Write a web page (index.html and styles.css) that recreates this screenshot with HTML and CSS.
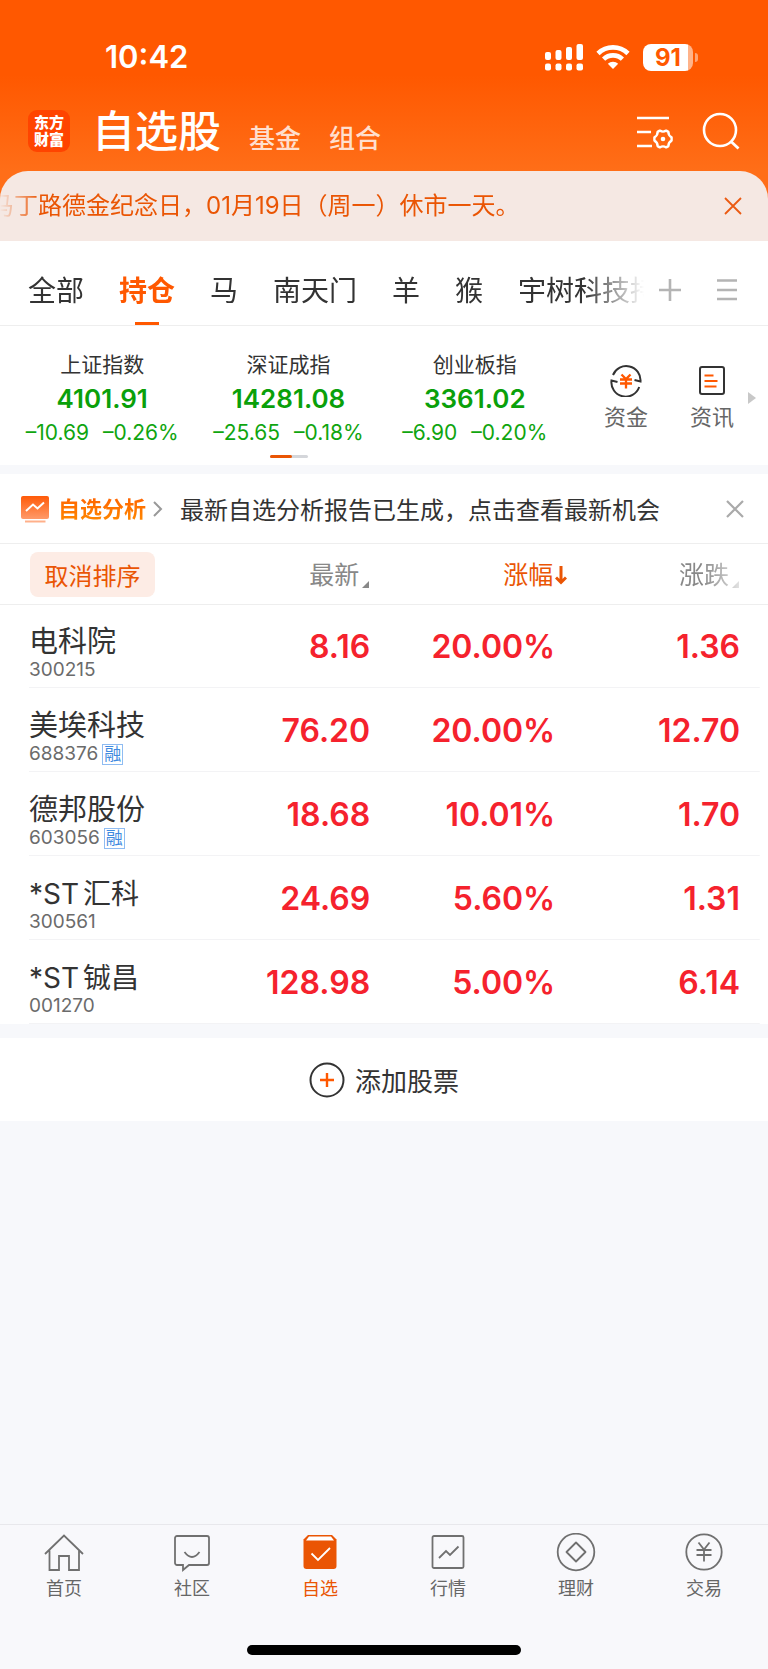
FILE: index.html
```html
<!DOCTYPE html>
<html lang="zh-CN">
<head>
<meta charset="utf-8">
<meta name="viewport" content="width=device-width, initial-scale=1">
<title>自选股</title>
<link rel="stylesheet" href="styles.css">
</head>
<body>
<header class="top">
  <div class="status">
    <time class="clock">10:42</time>
    <div class="status-icons">
      <svg width="38" height="27" viewBox="0 0 38 27" fill="#fff" aria-hidden="true">
        <rect x="0" y="8" width="6" height="8" rx="2"/><rect x="10.500" y="6" width="6" height="10" rx="2"/><rect x="21" y="3" width="6" height="13" rx="2"/><rect x="31.500" y="0" width="6.500" height="16" rx="2"/>
        <rect x="0" y="19.500" width="6" height="7" rx="2"/><rect x="10.500" y="19.500" width="6" height="7" rx="2"/><rect x="21" y="19.500" width="6" height="7" rx="2"/><rect x="31.500" y="19.500" width="6.500" height="7" rx="2"/>
      </svg>
      <svg width="34" height="26" viewBox="0 0 34 26" fill="none" stroke="#fff" stroke-width="4.600" aria-hidden="true">
        <path d="M2 9.500a21.500 21.500 0 0 1 30 0"/><path d="M7.600 15.200a13.500 13.500 0 0 1 18.800 0"/><path d="M17 25l-5.200-5.200a7.500 7.500 0 0 1 10.400 0z" fill="#fff" stroke="none"/>
      </svg>
      <div class="battery"><span class="battery-body">91</span><span class="battery-cap"></span></div>
    </div>
  </div>
  <div class="titlebar">
    <div class="logo"><span>东方</span><span>财富</span></div>
    <h1 class="title">自选股</h1>
    <a class="title-link" href="#">基金</a>
    <a class="title-link" href="#">组合</a>
    <div class="actions">
      <button class="icon-btn" aria-label="设置">
        <svg width="38" height="38" viewBox="0 0 38 38" fill="none" stroke="#fff" stroke-width="2.600">
          <path d="M1 6h32M1 20h14M1 34h15"/>
          <path d="M23.800 18.600q3.200 2 6.400 0l2.200 1.300q-.1 3.700 3.200 5.500v3.200q-3.300 1.800-3.200 5.500l-2.200 1.300q-3.200-2-6.400 0l-2.200-1.300q.1-3.700-3.200-5.500v-3.200q3.300-1.800 3.200-5.500z" stroke-width="2.400" stroke-linejoin="round"/>
          <circle cx="27" cy="27" r="2.300" fill="#fff" stroke="none"/>
        </svg>
      </button>
      <button class="icon-btn" aria-label="搜索">
        <svg width="38" height="38" viewBox="0 0 38 38" fill="none" stroke="#fff" stroke-width="2.600"><circle cx="18" cy="18" r="16"/><path d="M29 29.500l7.500 7" stroke-width="2.800"/></svg>
      </button>
    </div>
  </div>
</header>

<div class="notice">
  <p class="notice-text">马丁路德金纪念日，01月19日（周一）休市一天。</p>
  <button class="icon-btn" aria-label="关闭公告"><svg width="18" height="18" viewBox="0 0 18 18" fill="none" stroke="#eb5a12" stroke-width="1.800"><path d="M1 1l16 16M17 1L1 17"/></svg></button>
</div>

<nav class="groups" aria-label="分组">
  <div class="group-list">
    <a class="group" href="#">全部</a><a class="group group-on" href="#">持仓</a><a class="group" href="#">马</a><a class="group" href="#">南天门</a><a class="group" href="#">羊</a><a class="group" href="#">猴</a><a class="group" href="#">宇树科技持</a>
  </div>
  <button class="icon-btn" aria-label="添加分组"><svg width="24" height="24" viewBox="0 0 24 24" fill="none" stroke="#b4b4b4" stroke-width="2.600"><path d="M1 12h22M12 1v22"/></svg></button>
  <button class="icon-btn" aria-label="管理分组"><svg width="22" height="24" viewBox="0 0 22 24" fill="none" stroke="#b4b4b4" stroke-width="2.600"><path d="M1 2.500h20M1 12h20M1 21h20"/></svg></button>
</nav>

<section class="market">
  <div class="index-area">
    <div class="indices">
      <a class="index" href="#"><span class="index-name">上证指数</span><b class="index-value">4101.91</b><span class="index-change"><span>–10.69</span><span>–0.26%</span></span></a>
      <a class="index" href="#"><span class="index-name">深证成指</span><b class="index-value">14281.08</b><span class="index-change"><span>–25.65</span><span>–0.18%</span></span></a>
      <a class="index" href="#"><span class="index-name">创业板指</span><b class="index-value">3361.02</b><span class="index-change"><span>–6.90</span><span>–0.20%</span></span></a>
    </div>
    <div class="pager"><span class="pager-on"></span></div>
  </div>
  <div class="shortcuts">
    <a class="shortcut" href="#">
      <svg width="32" height="32" viewBox="0 0 32 32" fill="none" stroke="#333" stroke-width="2"><path d="M3 10a14.300 14.300 0 0 1 27.500 6.500l-6-1.500M29.200 22A14.300 14.300 0 0 1 1.500 15.500l6 1.500"/><path d="M11.500 9.500l4.500 4.500 4.500-4.500M10 14.500h12M10 18.500h12M16 14v9.500" stroke="#ff5800" stroke-width="2.300"/></svg>
      <span>资金</span>
    </a>
    <a class="shortcut" href="#">
      <svg width="32" height="32" viewBox="0 0 32 32" fill="none" stroke="#333" stroke-width="2"><rect x="4" y="2" width="24" height="27" rx="2"/><path d="M8.500 10.500h9M8.500 16h13M8.500 21.500h12" stroke="#ff5800" stroke-width="2.200"/></svg>
      <span>资讯</span>
    </a>
  </div>
  <button class="icon-btn" aria-label="更多"><svg width="10" height="12" viewBox="0 0 10 12" fill="#c8c8c8"><path d="M1 0l8 6-8 6z"/></svg></button>
</section>

<section class="analysis">
  <svg width="30" height="28" viewBox="0 0 30 28" fill="none" aria-hidden="true">
    <defs><linearGradient id="board" x1="0" y1="0" x2="0" y2="1"><stop offset="0" stop-color="#ff5a08"/><stop offset="1" stop-color="#ff9a6a"/></linearGradient></defs>
    <rect x="1" y="1" width="28" height="23" rx="2" fill="url(#board)"/><path d="M6 16l7-6.500 4.500 4L24 7.500" stroke="#fff" stroke-width="2"/><path d="M5 26.500h20.500" stroke="#ffb08a" stroke-width="2"/>
  </svg>
  <a class="analysis-link" href="#"><span class="analysis-title">自选分析</span><svg width="10" height="16" viewBox="0 0 10 16" fill="none" stroke="#999" stroke-width="2"><path d="M1 1l7 7-7 7"/></svg></a>
  <p class="analysis-text">最新自选分析报告已生成，点击查看最新机会</p>
  <button class="icon-btn" aria-label="关闭"><svg width="18" height="18" viewBox="0 0 18 18" fill="none" stroke="#aaa" stroke-width="2.200"><path d="M1 1l16 16M17 1L1 17"/></svg></button>
</section>

<table class="stocks">
  <thead>
    <tr>
      <th><button class="reset">取消排序</button></th>
      <th><button class="sort">最新<svg class="corner" width="7" height="7" viewBox="0 0 7 7" fill="#888"><path d="M7 0v7H0z"/></svg></button></th>
      <th><button class="sort sort-on">涨幅<svg width="12" height="20" viewBox="0 0 12 20" fill="none" stroke="#ea5504" stroke-width="3"><path d="M6 1v16M1 12.500l5 5 5-5"/></svg></button></th>
      <th><button class="sort sort-fade">涨跌<svg class="corner" width="7" height="7" viewBox="0 0 7 7" fill="#888"><path d="M7 0v7H0z"/></svg></button></th>
    </tr>
  </thead>
  <tbody>
    <tr><td><span class="name">电科院</span><span class="code">300215</span></td><td>8.16</td><td>20.00%</td><td>1.36</td></tr>
    <tr><td><span class="name">美埃科技</span><span class="code">688376<i class="tag">融</i></span></td><td>76.20</td><td>20.00%</td><td>12.70</td></tr>
    <tr><td><span class="name">德邦股份</span><span class="code">603056<i class="tag">融</i></span></td><td>18.68</td><td>10.01%</td><td>1.70</td></tr>
    <tr><td><span class="name name-st"><span>*ST</span><span>汇科</span></span><span class="code">300561</span></td><td>24.69</td><td>5.60%</td><td>1.31</td></tr>
    <tr><td><span class="name name-st"><span>*ST</span><span>铖昌</span></span><span class="code">001270</span></td><td>128.98</td><td>5.00%</td><td>6.14</td></tr>
  </tbody>
</table>

<button class="add">
  <svg width="36" height="36" viewBox="0 0 36 36" fill="none" stroke="#333" stroke-width="2"><circle cx="18" cy="18" r="16.500"/><path d="M11 18h14M18 11v14" stroke="#ff5800" stroke-width="2.400"/></svg>
  <span>添加股票</span>
</button>

<footer class="bottom">
  <nav class="tabs" aria-label="主导航">
    <a class="tab" href="#"><svg width="40" height="40" viewBox="0 0 40 40"><path d="M1 21L20 2.500 39 21M5.500 17.500V37H15V23h10v14h10V17.500"/></svg><span>首页</span></a>
    <a class="tab" href="#"><svg width="40" height="40" viewBox="0 0 40 40"><path d="M5 3h30a2 2 0 0 1 2 2v25a2 2 0 0 1-2 2H17l-6 5v-5H5a2 2 0 0 1-2-2V5a2 2 0 0 1 2-2zM12.500 19q7.500 10 15 0"/></svg><span>社区</span></a>
    <a class="tab tab-on" href="#"><svg width="40" height="40" viewBox="0 0 40 40"><path d="M8 2h24l4.500 4.500V33a3 3 0 0 1-3 3h-27a3 3 0 0 1-3-3V6.500z" fill="#ea5504" stroke="none"/><path d="M9 3.500h22l3 4H6z" fill="#fff" stroke="none"/><path d="M11.500 20.500l6.500 6.500L30 15" stroke="#fff"/></svg><span>自选</span></a>
    <a class="tab" href="#"><svg width="40" height="40" viewBox="0 0 40 40"><rect x="4.500" y="3" width="31" height="32" rx="1.500"/><path d="M11 25l7-7 4 4 8.500-8.500"/></svg><span>行情</span></a>
    <a class="tab" href="#"><svg width="40" height="40" viewBox="0 0 40 40"><circle cx="20" cy="19" r="18.300"/><path d="M20 9.500l9.500 9.500-9.500 9.500-9.500-9.500z" stroke-linejoin="round"/></svg><span>理财</span></a>
    <a class="tab" href="#"><svg width="40" height="40" viewBox="0 0 40 40"><circle cx="20" cy="19" r="17.700"/><path d="M14.500 9.500L20 16.500l5.500-7M12.500 17h15M12.500 22h15M20 16.500V28.500"/></svg><span>交易</span></a>
  </nav>
  <div class="home-bar"></div>
</footer>
</body>
</html>
```

FILE: styles.css
```css
* { box-sizing: border-box; }

body {
  margin: 0;
  min-height: 100vh;
  display: flex;
  flex-direction: column;
  background: #f7f8fb;
  color: #333;
  font-family: Inter, "Noto Sans CJK SC", sans-serif;
  font-size: 24px;
}

h1, p { margin: 0; font-weight: 400; }
a { color: inherit; text-decoration: none; }
button { padding: 0; border: 0; background: none; color: inherit; font: inherit; cursor: pointer; }
svg { display: block; flex: none; }
.icon-btn { flex: none; display: flex; }

/* Header */
.top {
  padding: 38px 28px 47px;
  background: linear-gradient(#ff5800 75px, #ff6e18 171px);
  color: #fff;
}
.status {
  display: flex;
  align-items: center;
  justify-content: space-between;
  height: 38px;
  padding: 0 42px 0 77px;
}
.clock { font-size: 31px; font-weight: 600; line-height: 38px; }
.status-icons { display: flex; align-items: center; gap: 13px; }
.battery { display: flex; align-items: center; gap: 2px; }
.battery-body {
  width: 50px;
  height: 27px;
  border-radius: 8px;
  background: linear-gradient(90deg, #fff 90%, #ffb38a 90%);
  color: #ff5800;
  font-size: 24px;
  font-weight: 700;
  line-height: 27px;
  text-align: center;
}
.battery-cap { width: 3px; height: 9px; border-radius: 0 4px 4px 0; background: #ffa373; }
.titlebar { display: flex; align-items: flex-end; height: 76px; }
.logo {
  display: flex;
  flex-direction: column;
  align-items: center;
  justify-content: center;
  width: 42px;
  height: 42px;
  border-radius: 9px;
  background: #ff4400;
  font-size: 15px;
  font-weight: 900;
  line-height: 17px;
}
.title { margin-left: 22px; font-size: 43px; font-weight: 500; line-height: 42px; }
.title-link { margin-left: 28px; color: #ffdfce; font-size: 26px; font-weight: 500; line-height: 26px; }
.actions { display: flex; gap: 28px; margin-left: auto; padding-bottom: 2px; }

/* Notice */
.notice {
  display: flex;
  align-items: center;
  justify-content: space-between;
  height: 70px;
  margin-top: -28px;
  padding-right: 26px;
  border-radius: 28px 28px 0 0;
  background: #f5e8e3;
  color: #ea5504;
}
.notice-text {
  overflow: hidden;
  white-space: nowrap;
  text-indent: -10px;
  text-spacing-trim: space-all;
  line-height: 32px;
  mask-image: linear-gradient(90deg, transparent, #000 40px);
}

/* Watchlist groups */
.groups {
  display: flex;
  align-items: center;
  height: 85px;
  padding: 0 30px 0 28px;
  border-bottom: 1px solid #eee;
  background: #fff;
}
.group-list {
  flex: 1;
  display: flex;
  gap: 35px;
  min-width: 0;
  height: 84px;
  margin-right: 14px;
  overflow: hidden;
  mask-image: linear-gradient(270deg, transparent, #000 60px);
}
.group { flex: none; font-size: 28px; line-height: 101px; }
.group-on {
  background: linear-gradient(#ff5800, #ff5800) 50% 100% / 24px 3px no-repeat;
  color: #ff5800;
  font-weight: 700;
}
.groups .icon-btn { margin-top: 14px; }
.groups .icon-btn + .icon-btn { margin-left: 34px; }

/* Indices */
.market {
  display: flex;
  align-items: center;
  height: 139px;
  padding: 0 11px 0 9px;
  background: #fff;
}
.index-area { flex: 1; padding-top: 25px; align-self: flex-start; }
.indices { display: grid; grid-template-columns: repeat(3, 1fr); }
.index { display: flex; flex-direction: column; align-items: center; }
.index-name { font-size: 21px; line-height: 28px; }
.index-value { color: #0aa00a; font-size: 26px; font-weight: 600; line-height: 40px; }
.index-change { display: flex; gap: 14px; color: #0fa50f; font-size: 21px; line-height: 28px; }
.pager { width: 38px; height: 3px; margin: 8px auto 0; border-radius: 2px; background: #d4d6da; }
.pager-on { display: block; width: 22px; height: 3px; border-radius: 2px; background: #ea5504; }
.shortcuts { display: flex; width: 172px; margin-left: 15px; padding-top: 4px; }
.shortcut {
  flex: 1;
  display: flex;
  flex-direction: column;
  align-items: center;
  gap: 6px;
  color: #666;
  font-size: 22px;
  line-height: 28px;
}
.shortcuts + .icon-btn { margin-left: -8px; padding-top: 4px; }

/* Analysis banner */
.analysis {
  display: flex;
  align-items: center;
  height: 70px;
  margin-top: 9px;
  padding: 0 24px 0 20px;
  border-bottom: 1px solid #eee;
  background: #fff;
}
.analysis-link { display: flex; align-items: center; gap: 7px; margin-left: 8px; }
.analysis-title {
  padding-bottom: 3px;
  background: linear-gradient(#ff5a00, #ff9000);
  background-clip: text;
  color: transparent;
  font-size: 22px;
  font-weight: 700;
}
.analysis-text { flex: 1; margin-left: 17px; white-space: nowrap; }

/* Stocks */
.stocks {
  width: 100%;
  table-layout: fixed;
  border-collapse: collapse;
  background: #fff;
  text-align: right;
}
.stocks th {
  width: 24.1%;
  height: 60px;
  padding: 2px 1px 0 0;
  border-bottom: 1px solid #eee;
  font-weight: 400;
  text-align: right;
}
.stocks th:first-child { padding-left: 30px; text-align: left; }
.stocks th:last-child { width: 27.7%; padding-right: 29px; }
.reset {
  width: 125px;
  height: 45px;
  border-radius: 8px;
  background: #fdece5;
  color: #ea5504;
}
.sort { display: inline-flex; align-items: center; gap: 3px; color: #888; font-size: 25px; line-height: 36px; }
.sort-on { gap: 2px; margin-right: -13px; color: #ea5504; }
.sort-fade { mask-image: linear-gradient(90deg, #000 40%, rgba(0, 0, 0, .25)); }
.corner { align-self: flex-end; margin-bottom: 5px; }
.stocks tbody tr {
  background: linear-gradient(#f3f3f5, #f3f3f5) right 8px bottom / calc(100% - 37px) 1px no-repeat;
}
.stocks td {
  height: 84px;
  padding: 2px 0 0;
  color: #f5222d;
  font-size: 32px;
  font-weight: 600;
  line-height: 40px;
}
.stocks td:first-child {
  padding: 16px 0 0 29px;
  color: #333;
  font-weight: 400;
  text-align: left;
  white-space: nowrap;
}
.stocks td:last-child { padding-right: 28px; }
.name { display: block; font-size: 29px; line-height: 32px; }
.name-st { display: flex; gap: 4px; font-size: 28px; }
.code { display: flex; align-items: center; gap: 4px; height: 24px; color: #6b6b6b; font-size: 19px; line-height: 24px; }
.tag {
  width: 21px;
  height: 21px;
  border: 1px solid #8fbcf2;
  color: #3f8ae0;
  font-size: 17px;
  font-style: normal;
  line-height: 19px;
  text-align: center;
}

/* Add */
.add {
  display: flex;
  align-items: center;
  justify-content: center;
  gap: 10px;
  height: 83px;
  margin-top: 14px;
  background: #fff;
  font-size: 26px;
}

/* Bottom navigation */
.bottom {
  margin-top: auto;
  padding-bottom: 14px;
  border-top: 1px solid #e8e8ec;
  background: #f8f8fb;
}
.tabs { display: grid; grid-template-columns: repeat(6, 1fr); height: 120px; padding-top: 8px; }
.tab { display: flex; flex-direction: column; align-items: center; gap: 3px; color: #666; font-size: 18px; line-height: 26px; }
.tab svg { fill: none; stroke: #707070; stroke-width: 1.8; }
.tab-on { color: #ea5504; }
.home-bar { width: 274px; height: 10px; margin: 0 auto; border-radius: 5px; background: #000; }
```
